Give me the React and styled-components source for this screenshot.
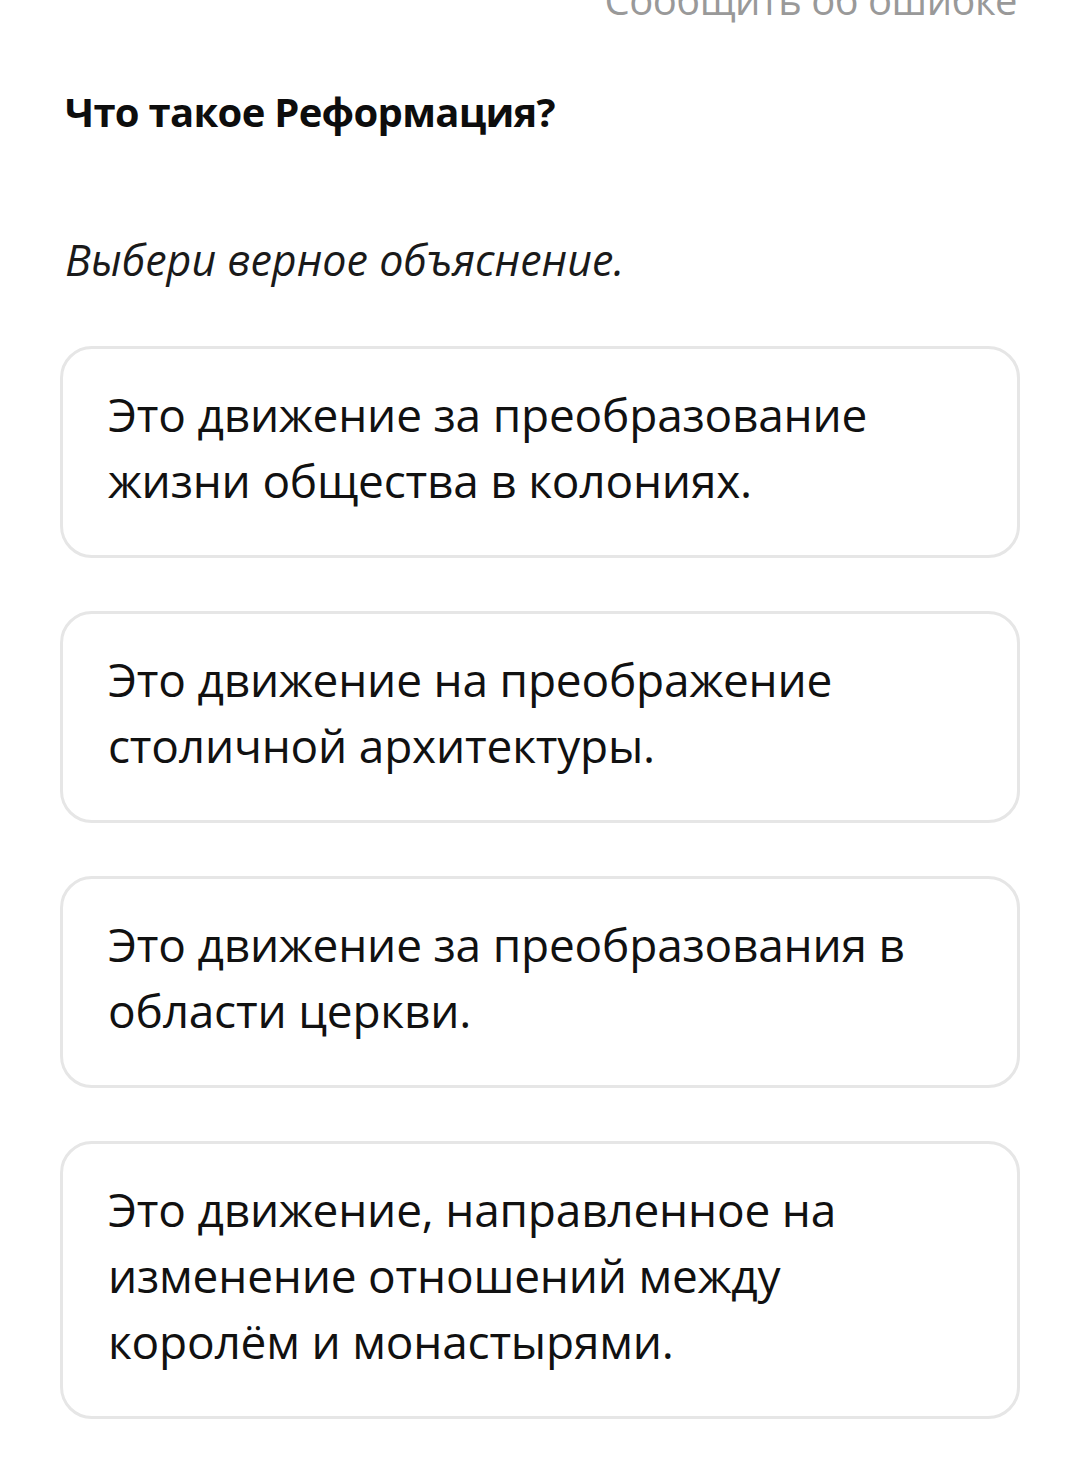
import React from 'react';
import styled, { createGlobalStyle } from 'styled-components';

const GlobalStyle = createGlobalStyle`
    html, body {
        margin: 0;
        padding: 0;
        background: #ffffff;
    }
    body {
        font-family: 'Open Sans', 'Noto Sans', sans-serif;
        color: #111111;
    }
`;

const options = [
    'Это движение за преобразование жизни общества в колониях.',
    'Это движение на преображение столичной архитектуры.',
    'Это движение за преобразования в области церкви.',
    'Это движение, направленное на изменение отношений между королём и монастырями.',
];

const App = () => {
    return (
        <Page>
            <GlobalStyle />
            <ReportLink>Сообщить об ошибке</ReportLink>
            <Question>Что такое Реформация?</Question>
            <Hint>Выбери верное объяснение.</Hint>
            <OptionList>
                {options.map(text => (
                    <OptionCard key={text}>{text}</OptionCard>
                ))}
            </OptionList>
        </Page>
    );
};

const Page = styled.div`
    display: flex;
    flex-direction: column;
    width: 1075px;
    min-height: 1475px;
    padding: 0 55px 0 60px;
    box-sizing: border-box;
    overflow: hidden;
`;

const ReportLink = styled.div`
    align-self: flex-end;
    margin-top: -23px;
    margin-right: 3px;
    font-size: 40px;
    line-height: 46px;
    color: #999999;
    letter-spacing: -0.5px;
`;

const Question = styled.h1`
    margin: 63px 0 0 5px;
    font-size: 40px;
    line-height: 52px;
    font-weight: 700;
    letter-spacing: -0.7px;
    color: #0d0d0d;
`;

const Hint = styled.p`
    margin: 97px 0 0 5px;
    font-size: 43px;
    line-height: 50px;
    font-style: italic;
    letter-spacing: 0;
    color: #1a1a1a;
`;

const OptionList = styled.div`
    display: flex;
    flex-direction: column;
    gap: 53px;
    margin-top: 61px;
`;

const OptionCard = styled.div`
    padding: 32px 100px 42px 45px;
    border: 3px solid #e6e6e6;
    border-radius: 32px;
    font-size: 46px;
    line-height: 66px;
    letter-spacing: -0.2px;
    color: #111111;
`;

export default App;
